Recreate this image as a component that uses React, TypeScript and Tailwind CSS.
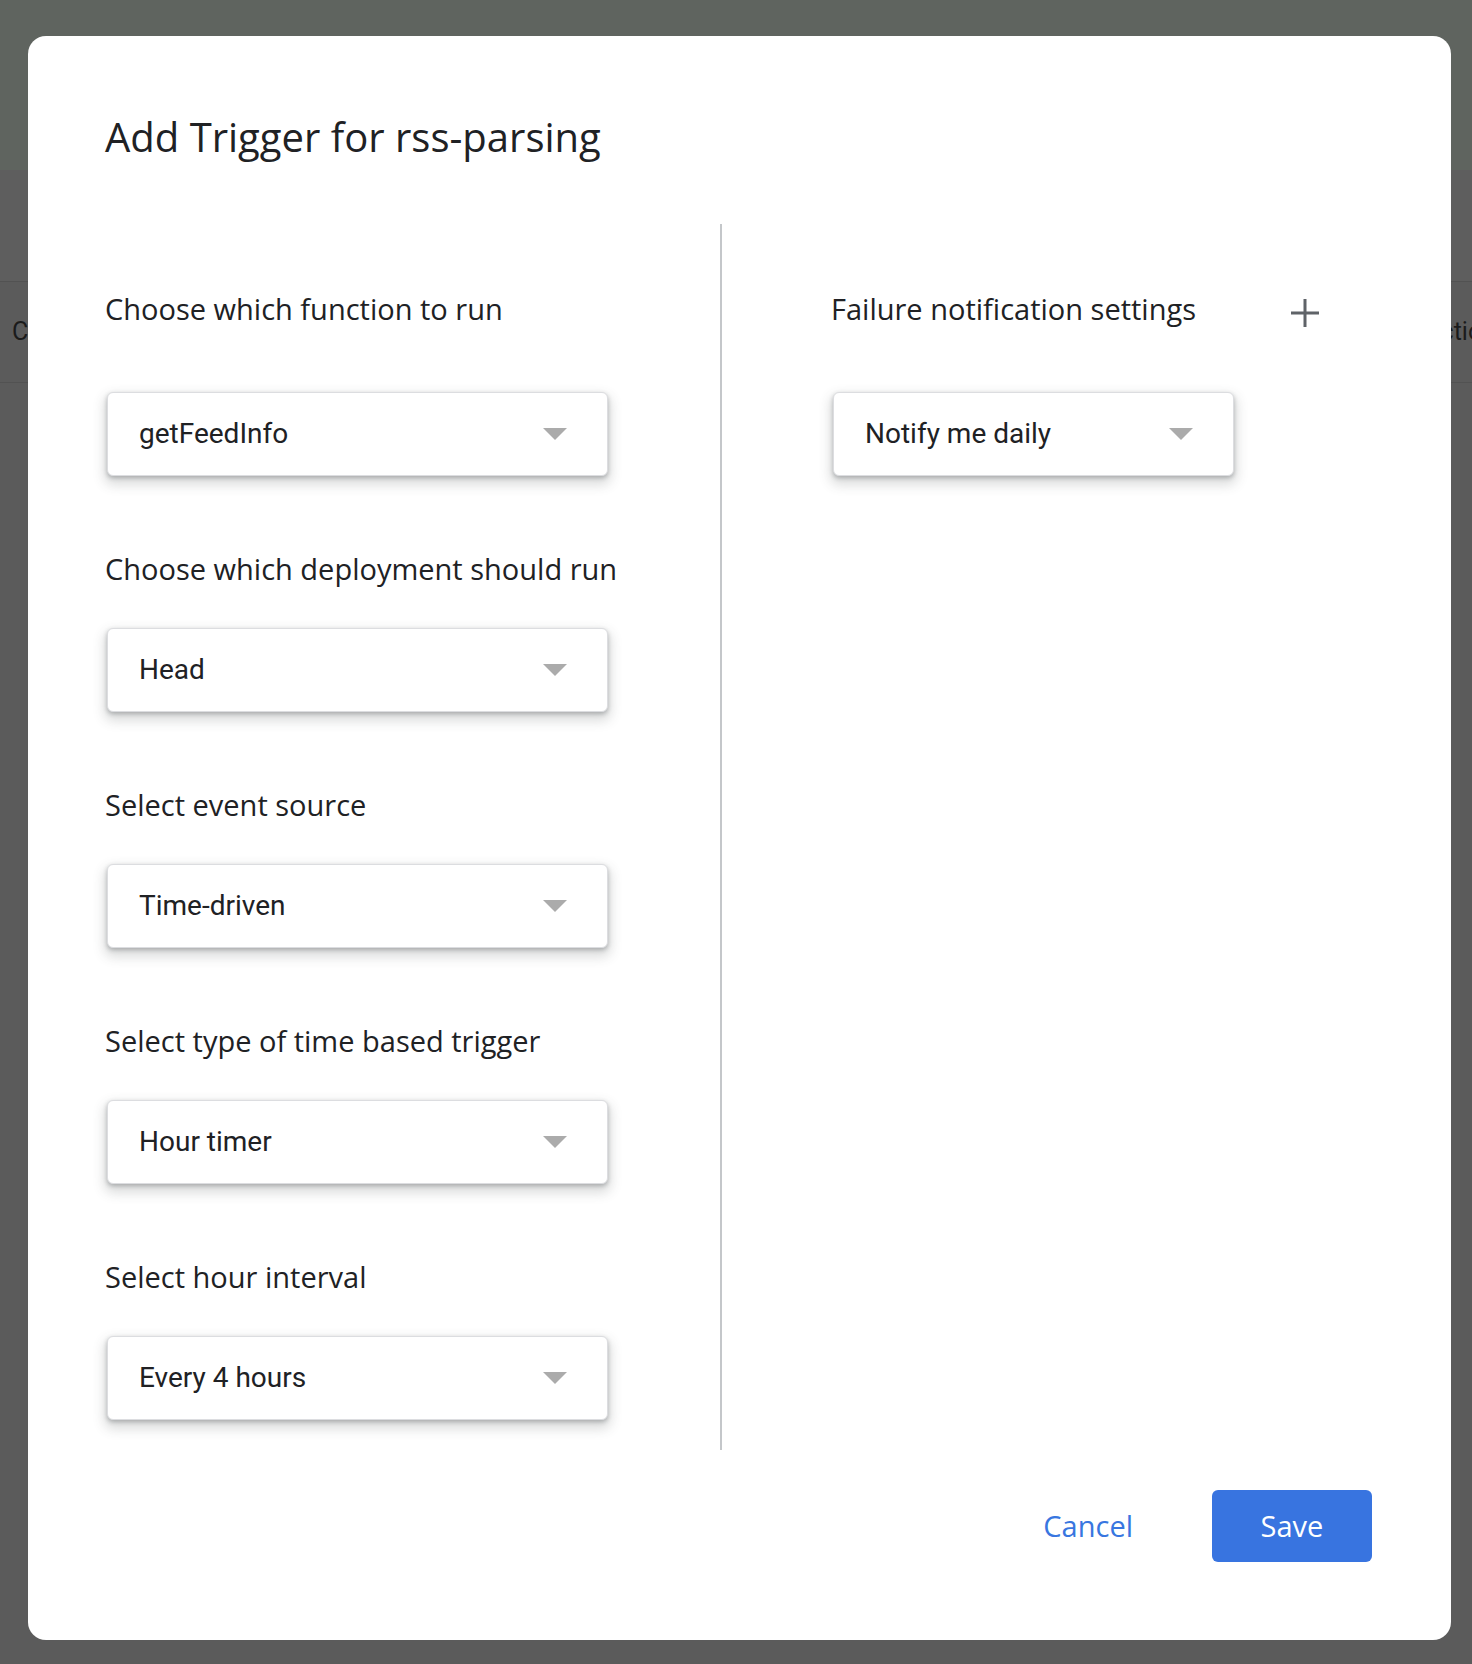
import React from "react";

function Arrow() {
  return (
    <svg width="24" height="12" viewBox="0 0 24 12" className="shrink-0">
      <path d="M0 0 L24 0 L12 12 Z" fill="#ababab" />
    </svg>
  );
}

function Select({ value, width }: { value: string; width: string }) {
  return (
    <div
      className={`ml-[2px] ${width} h-[84px] flex items-center justify-between pl-[31px] pr-[40px] bg-white rounded-[6px] border border-[#dcdde0] shadow-[0_2px_4px_rgba(60,64,67,0.32),0_6px_12px_3px_rgba(60,64,67,0.18)]`}
    >
      <span className="font-['Roboto',sans-serif] text-[28px] leading-[36px] text-[#202124]">
        {value}
      </span>
      <Arrow />
    </div>
  );
}

function Label({ children }: { children: React.ReactNode }) {
  return (
    <div className="font-['Open_Sans',sans-serif] text-[29px] leading-[36px] text-[#202124] whitespace-nowrap">
      {children}
    </div>
  );
}

export default function App() {
  const fields = [
    { label: "Choose which deployment should run", value: "Head" },
    { label: "Select event source", value: "Time-driven" },
    { label: "Select type of time based trigger", value: "Hour timer" },
    { label: "Select hour interval", value: "Every 4 hours" },
  ];
  return (
    <div className="relative w-[1472px] h-[1664px] overflow-hidden bg-[#5b5b5b] font-['Roboto',sans-serif]">
      {/* dimmed page behind the dialog */}
      <div className="h-[170px] bg-[#5f645f]" />
      <div className="h-[111px] bg-[#5e5e5e]" />
      <div className="h-[102px] border-t border-b border-[#525252] flex items-center pl-[12px] text-[25px] text-[#1b1b1b]">
        <span>Code</span>
        <span className="ml-auto mr-[-24px]">Function</span>
      </div>

      {/* dialog */}
      <div
        role="dialog"
        className="absolute left-[28px] top-[36px] w-[1423px] h-[1604px] bg-white rounded-[18px] flex flex-col pl-[77px] pt-[77px]"
      >
        <h1 className="h-[48px] font-['Open_Sans',sans-serif] text-[40px] leading-[48px] text-[#202124] font-normal">
          Add Trigger for rss-parsing
        </h1>

        <div className="mt-[63px] h-[1226px] flex">
          <div className="w-[615px] pt-[67px] flex flex-col">
            <Label>Choose which function to run</Label>
            <div className="mt-[65px]">
              <Select value="getFeedInfo" width="w-[501px]" />
            </div>
            {fields.map((f) => (
              <div key={f.label} className="mt-[75px]">
                <Label>{f.label}</Label>
                <div className="mt-[41px]">
                  <Select value={f.value} width="w-[501px]" />
                </div>
              </div>
            ))}
          </div>

          <div className="w-[2px] bg-[#c4c7ca]" />

          <div className="pl-[109px] pt-[67px] flex flex-col">
            <div className="flex items-center">
              <div className="w-[460px]">
                <Label>Failure notification settings</Label>
              </div>
              <svg width="28" height="28" viewBox="0 0 28 28" className="mt-[8px]">
                <path d="M14 0 V28 M0 14 H28" stroke="#5f6368" strokeWidth="3" />
              </svg>
            </div>
            <div className="mt-[65px]">
              <Select value="Notify me daily" width="w-[401px]" />
            </div>
          </div>
        </div>

        <div className="mt-[40px] h-[72px] flex items-center justify-end pr-[79px]">
          <button className="mr-[79px] font-['Open_Sans',sans-serif] font-medium text-[29px] text-[#3876e0]">
            Cancel
          </button>
          <button className="w-[160px] h-[72px] rounded-[6px] bg-[#3874e0] text-white font-['Open_Sans',sans-serif] font-medium text-[29px]">
            Save
          </button>
        </div>
      </div>
    </div>
  );
}
